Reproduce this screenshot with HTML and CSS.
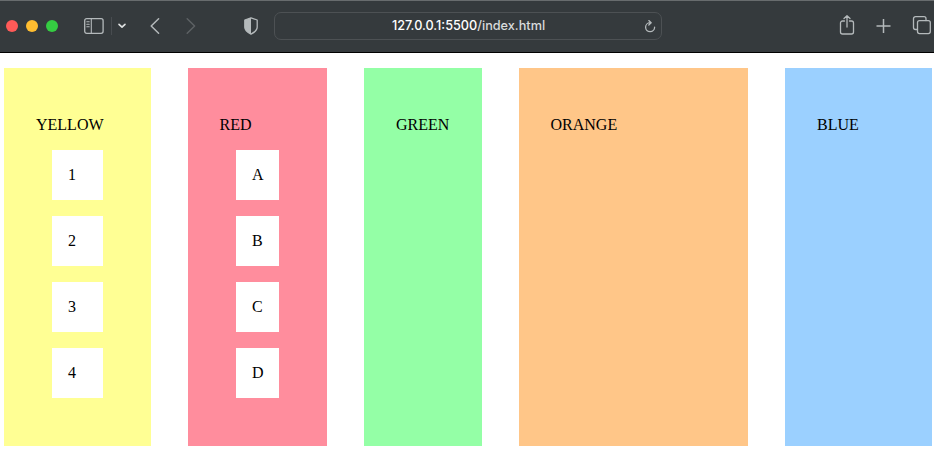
FILE: index.html
```html
<!DOCTYPE html>
<html lang="en">
<head>
<meta charset="utf-8">
<title>Colour columns</title>
<link rel="stylesheet" href="styles.css">
</head>
<body>
<header class="toolbar">
  <div class="lights"><span class="light close"></span><span class="light minimise"></span><span class="light expand"></span></div>
  <svg class="icon sidebar" width="20" height="16" viewBox="0 0 20 16"><rect x=".7" y=".7" width="18.4" height="14.6" rx="2"/><path d="M7.3 1v14M2.8 3.7h2.4M2.8 6.2h2.4M2.8 8.7h2.4"/></svg>
  <span class="divider"></span>
  <svg class="icon chevron" width="8" height="6" viewBox="0 0 8 6"><path d="M1 1.3 4 4.2 7 1.3"/></svg>
  <svg class="icon back" width="10" height="16" viewBox="0 0 10 16"><path d="M8.6.8 1.2 8l7.4 7.2"/></svg>
  <svg class="icon forward" width="10" height="16" viewBox="0 0 10 16"><path d="m1.2.8 7.4 7.2-7.4 7.2"/></svg>
  <svg class="icon shield" width="14" height="18" viewBox="0 0 14 18"><path d="M7 .8 13.2 3v7.3c0 3.2-3.1 5.3-6.2 6.9-3.1-1.6-6.2-3.7-6.2-6.900V3z"/><path class="filled" d="M7 .8v16.400C3.900 15.600.8 13.500.8 10.300V3z"/></svg>
  <div class="address">
    <span class="url">127.0.0.1:5500<span class="path">/index.html</span></span>
    <svg class="icon reload" width="12" height="13" viewBox="0 0 12 13"><path d="M6 2.700a4.500 4.500 0 1 0 4.600 4.500M4.800.6 7.200 2.800 4.800 5"/></svg>
  </div>
  <svg class="icon share" width="16" height="21" viewBox="0 0 16 21"><path d="M5.500 6H3.500a2 2 0 0 0-2 2v9a2 2 0 0 0 2 2h9a2 2 0 0 0 2-2V8a2 2 0 0 0-2-2h-2M8 12V.800M5 3.500 8 .6l3 2.900"/></svg>
  <svg class="icon plus" width="14" height="16" viewBox="0 0 14 16"><path d="M7.500 1v14M.5 8h14"/></svg>
  <svg class="icon tabs" width="19" height="19" viewBox="0 0 19 19"><rect x="4.500" y="4.600" width="12.800" height="13" rx="2"/><path d="M4.500 13.500h-2a2 2 0 0 1-2-2V2.700a2 2 0 0 1 2-2h8.500a2 2 0 0 1 2 2v1.900"/></svg>
</header>
<main class="columns">
  <section class="column yellow"><p>YELLOW</p><div class="item">1</div><div class="item">2</div><div class="item">3</div><div class="item">4</div></section>
  <section class="column red"><p>RED</p><div class="item">A</div><div class="item">B</div><div class="item">C</div><div class="item">D</div></section>
  <section class="column green"><p>GREEN</p></section>
  <section class="column orange"><p>ORANGE</p></section>
  <section class="column blue"><p>BLUE</p></section>
</main>
</body>
</html>
```
FILE: styles.css
```css
* { box-sizing: border-box; }
body {
  margin: 0;
  background: #fff;
  color: #000;
  font: 16px/18px "Liberation Serif", serif;
  overflow: hidden;
}
.toolbar {
  display: flex;
  align-items: center;
  height: 53px;
  padding: 0 0 2px 6px;
  background: #353a3d;
  border-top: 1px solid #686c6e;
  border-bottom: 1px solid #000;
}
.lights { display: flex; gap: 8px; }
.light { width: 12px; height: 12px; border-radius: 50%; }
.close { background: #ff5a58; }
.minimise { background: #ffbd30; }
.expand { background: #35cc42; }
.icon {
  flex: none;
  fill: none;
  stroke: #b4b9bb;
  stroke-width: 1.3;
  stroke-linecap: round;
  stroke-linejoin: round;
  overflow: visible;
}
.sidebar { margin-left: 26px; }
.sidebar path { stroke-width: 1.1; }
.divider { width: 1px; height: 18px; margin-left: 7px; background: #484c50; }
.chevron { margin-left: 6px; stroke: #dfe1e2; stroke-width: 1.6; }
.back { margin-left: 24px; stroke-width: 1.5; }
.forward { margin-left: 26px; stroke: #5d6164; stroke-width: 1.5; }
.shield { margin-left: 48px; }
.shield .filled { fill: #b4b9bb; stroke: none; }
.address {
  display: flex;
  align-items: center;
  width: 388px;
  height: 28px;
  margin-left: 16px;
  padding-right: 5px;
  border: 1px solid #4d5154;
  border-radius: 7px;
}
.url {
  flex: 1;
  padding-left: 18px;
  color: #fff;
  font: 500 12.7px/18px Inter, sans-serif;
  text-align: center;
}
.path { color: #d9dbdc; }
.reload { margin-top: 2px; stroke-width: 1.3; }
.share { margin-left: 177px; }
.plus { margin-left: 21px; stroke-width: 1.5; stroke-linecap: butt; }
.tabs { margin-left: 23px; }
.columns {
  display: grid;
  grid-template-columns: 147px 139px 118px 229px 147px;
  column-gap: 37px;
  height: 378px;
  margin: 15px 0 0 4px;
}
.column { padding: 32px; }
.column p { margin: 16px 0; }
.red p, .orange p { margin-left: -0.5px; }
.item {
  margin: 16px;
  padding: 16px;
  background: #fff;
}
.yellow { background: #ffff94; }
.red { background: #ff8d9d; }
.green { background: #94ffa6; }
.orange { background: #ffc688; }
.blue { background: #9bd0ff; }
```
